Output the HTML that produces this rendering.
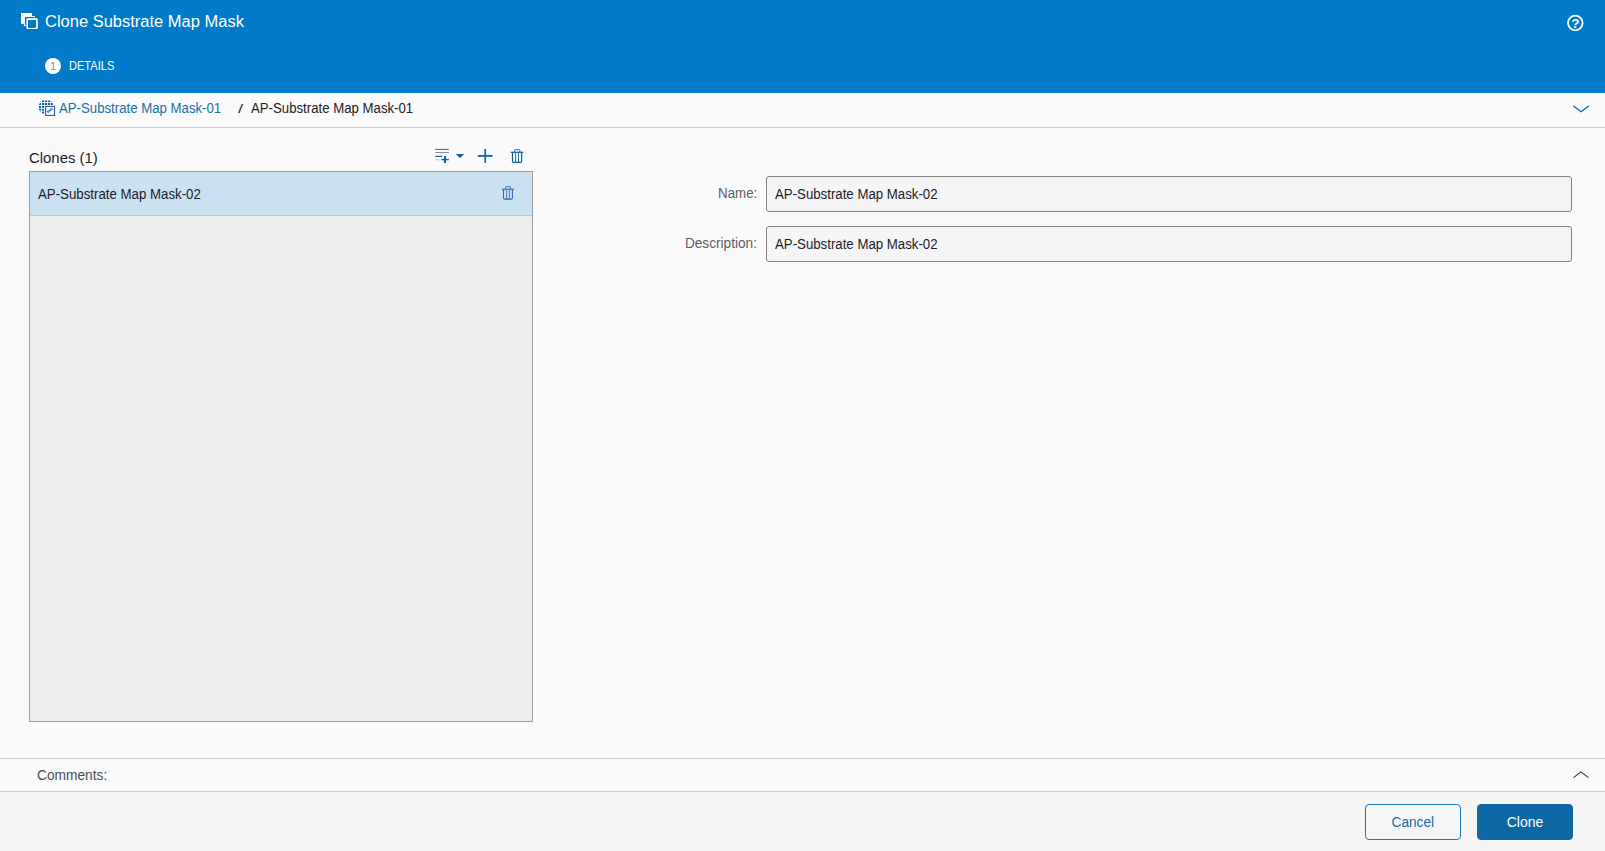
<!DOCTYPE html>
<html lang="en">
<head>
<meta charset="utf-8">
<title>Clone Substrate Map Mask</title>
<style>
  html, body { margin: 0; padding: 0; }
  body {
    width: 1605px; height: 851px; overflow: hidden; position: relative;
    background: #fafafa;
    font-family: "Liberation Sans", sans-serif;
    color: #1f1f1f;
  }
  .abs { position: absolute; white-space: nowrap; }
  .t { display: inline-block; transform-origin: 0 50%; }
  .tr { display: inline-block; transform-origin: 100% 50%; }
  .header { left: 0; top: 0; width: 1605px; height: 93px; background: #007ac9; }
  .title { left: 45px; top: 12px; font-size: 16px; line-height: 20px; color: #fff; }
  .title .t { transform: scaleX(1.031); }
  .step-circle { left: 45px; top: 58px; width: 16px; height: 16px; border-radius: 50%; background: #fff; color: #6c8fb5; font-size: 11px; line-height: 16px; text-align: center; }
  .step-label { left: 69.3px; top: 58px; font-size: 12px; line-height: 16px; color: #fff; }
  .step-label .t { transform: scaleX(0.922); }
  .crumbbar { left: 0; top: 93px; width: 1605px; height: 34px; background: #fafafa; border-bottom: 1px solid #c8cccd; }
  .crumb-link { left: 58.5px; top: 100px; font-size: 14px; line-height: 16px; color: #1a6fa8; }
  .crumb-sep { left: 237.8px; top: 101px; font-size: 13px; line-height: 16px; color: #333; }
  .crumb-sep .t { transform: scaleX(1.4); }
  .crumb-cur { left: 250.5px; top: 100px; font-size: 14px; line-height: 16px; color: #222; }
  .crumb-link .t, .crumb-cur .t { transform: scaleX(0.9432); }
  .clones-title { left: 29.3px; top: 149px; font-size: 15.5px; line-height: 18px; color: #1c1c2c; }
  .clones-title .t { transform: scaleX(0.962); }
  .listbox { left: 29px; top: 171px; width: 502px; height: 549px; background: #ececec; border: 1px solid #a09ca2; }
  .row { left: 0; top: 0; width: 502px; height: 43px; background: #c9e1f0; border-bottom: 1px solid #c4c8cc; }
  .row-text { left: 8.3px; top: 14px; font-size: 14px; line-height: 16px; color: #1c1c2c; }
  .row-text .t { transform: scaleX(0.947); }
  .label { font-size: 14px; line-height: 16px; color: #5d5d5d; text-align: right; width: 200px; }
  .input { left: 766px; width: 804px; height: 34px; background: #f5f5f5; border: 1px solid #828282; border-radius: 3px; }
  .input span { position: absolute; left: 8px; top: 9px; font-size: 14px; line-height: 16px; color: #1c1c2c; transform-origin: 0 50%; transform: scaleX(0.9455); }
  .line { left: 0; width: 1605px; height: 1px; background: #c8cccd; }
  .footer { left: 0; top: 792px; width: 1605px; height: 59px; background: #f5f5f5; }
  .comments { left: 37px; top: 767px; font-size: 14px; line-height: 16px; color: #4a4a55; }
  .comments .t { transform: scaleX(0.982); }
  .btn { top: 804px; width: 96px; height: 36px; box-sizing: border-box; border-radius: 4px; font-size: 14px; line-height: 34px; text-align: center; }
  .btn-cancel { left: 1365px; border: 1px solid #1a7abf; color: #1a6aa5; background: #f6f6f6; }
  .btn-clone { left: 1477px; border: 1px solid #0d68a5; color: #fff; background: #0d68a5; }
  .btn span { display: inline-block; }
  svg { position: absolute; overflow: visible; }
</style>
</head>
<body>
  <div class="abs header"></div>
  <div class="abs title"><span class="t">Clone Substrate Map Mask</span></div>
  <div class="abs step-circle">1</div>
  <div class="abs step-label"><span class="t">DETAILS</span></div>

  <div class="abs crumbbar"></div>
  <div class="abs crumb-link"><span class="t">AP-Substrate Map Mask-01</span></div>
  <div class="abs crumb-sep"><span class="t">/</span></div>
  <div class="abs crumb-cur"><span class="t">AP-Substrate Map Mask-01</span></div>

  <div class="abs clones-title"><span class="t">Clones (1)</span></div>
  <div class="abs listbox">
    <div class="abs row"></div>
    <div class="abs row-text"><span class="t">AP-Substrate Map Mask-02</span></div>
  </div>

  <div class="abs label" style="left:557px; top:185px;"><span class="tr" style="transform:scaleX(0.9507)">Name:</span></div>
  <div class="abs input" style="top:176px;"><span>AP-Substrate Map Mask-02</span></div>
  <div class="abs label" style="left:557px; top:235px;"><span class="tr" style="transform:scaleX(0.974)">Description:</span></div>
  <div class="abs input" style="top:226px;"><span>AP-Substrate Map Mask-02</span></div>

  <div class="abs line" style="top:758px;"></div>
  <div class="abs comments"><span class="t">Comments:</span></div>
  <div class="abs line" style="top:791px;"></div>
  <div class="abs footer"></div>
  <div class="abs btn btn-cancel"><span style="transform:scaleX(0.977)">Cancel</span></div>
  <div class="abs btn btn-clone"><span>Clone</span></div>
  <!-- title clone icon -->
  <svg width="1605" height="851" viewBox="0 0 1605 851" style="left:0;top:0;pointer-events:none">
    <g>
      <rect x="21" y="13" width="11" height="10.8" fill="#fff"/>
      <rect x="23.8" y="16" width="10.9" height="10.1" rx="0.6" fill="#fff"/>
      <rect x="24.9" y="16.95" width="9.2" height="8.2" fill="#007ac9"/>
      <rect x="26.4" y="18.2" width="11.4" height="10.9" rx="1" fill="#fff"/>
      <rect x="28" y="20" width="8.1" height="7.9" fill="#007ac9"/>
    </g>
    <!-- help icon -->
    <circle cx="1575.3" cy="23" r="7.3" fill="none" stroke="#fff" stroke-width="1.8"/>
    <text x="1575.4" y="27.9" font-family="Liberation Sans, sans-serif" font-size="13.5" font-weight="bold" fill="#fff" text-anchor="middle">?</text>

    <!-- breadcrumb wafer icon -->
    <defs><clipPath id="wc"><circle cx="46.2" cy="107" r="7.6"/></clipPath></defs>
    <g clip-path="url(#wc)" fill="#0b60b3">
      <rect x="39" y="100.5" width="2.1" height="1.5"/><rect x="42" y="100.5" width="2.1" height="1.5"/><rect x="45" y="100.5" width="2.1" height="1.5"/><rect x="47.9" y="100.5" width="2.1" height="1.5"/><rect x="50.8" y="100.5" width="2.1" height="1.5"/>
      <rect x="39" y="103" width="2.1" height="2"/><rect x="42" y="103" width="2.1" height="2"/><rect x="45" y="103" width="2.1" height="2"/><rect x="47.9" y="103" width="2.1" height="2"/><rect x="50.8" y="103" width="2.1" height="2"/>
      <rect x="39" y="105.9" width="2.1" height="2"/><rect x="42" y="105.9" width="2.1" height="2"/>
      <rect x="39" y="108.7" width="2.1" height="2"/><rect x="42" y="108.7" width="2.1" height="2"/>
      <rect x="39" y="111.5" width="2.1" height="2"/><rect x="42" y="111.5" width="2.1" height="2"/>
    </g>
    <rect x="45.6" y="106.4" width="8.9" height="9" fill="#fff" stroke="#3555a8" stroke-width="1.1"/>
    <g transform="translate(49.9 110.4) rotate(-37)"><rect x="-3.45" y="-1.15" width="1.15" height="1.15" fill="#2450b0"/><rect x="-2.30" y="-1.15" width="1.15" height="1.15" fill="#62a8ee"/><rect x="-1.15" y="-1.15" width="1.15" height="1.15" fill="#2450b0"/><rect x="0.00" y="-1.15" width="1.15" height="1.15" fill="#62a8ee"/><rect x="1.15" y="-1.15" width="1.15" height="1.15" fill="#2450b0"/><rect x="2.30" y="-1.15" width="1.15" height="1.15" fill="#62a8ee"/><rect x="-3.45" y="0.00" width="1.15" height="1.15" fill="#62a8ee"/><rect x="-2.30" y="0.00" width="1.15" height="1.15" fill="#2450b0"/><rect x="-1.15" y="0.00" width="1.15" height="1.15" fill="#62a8ee"/><rect x="0.00" y="0.00" width="1.15" height="1.15" fill="#2450b0"/><rect x="1.15" y="0.00" width="1.15" height="1.15" fill="#62a8ee"/><rect x="2.30" y="0.00" width="1.15" height="1.15" fill="#2450b0"/></g>

    <!-- breadcrumb chevron down -->
    <path d="M1573.5 106 L1581.1 111.8 L1588.7 106" fill="none" stroke="#0b62b0" stroke-width="1.3"/>

    <!-- list add icon -->
    <path d="M435.2 149.4 H448.8" stroke="#4a5eaa" stroke-width="1"/>
    <path d="M435.2 152.5 H448.8" stroke="#8c8898" stroke-width="1"/>
    <path d="M435.2 156.4 H442.1" stroke="#0a62a5" stroke-width="1.2"/>
    <path d="M435.5 159.8 H439.2" stroke="#bfc3c8" stroke-width="1.2"/>
    <path d="M441.3 159.6 H448.8" stroke="#0a62a5" stroke-width="1.4"/>
    <path d="M445 156 V163" stroke="#0a62b5" stroke-width="2"/>
    <path d="M455.8 153.9 H464.2 L460 158.1 Z" fill="#0a62a5"/>

    <!-- plus -->
    <path d="M477.9 155.9 H492.5" stroke="#0a62a8" stroke-width="1.8"/>
    <path d="M485.25 148.9 V162.9" stroke="#0a66b8" stroke-width="1.7"/>

    <!-- trash (toolbar) -->
    <g fill="none" stroke="#0a62a5" stroke-width="1.25">
      <path d="M510.8 152.3 H523.3"/>
      <path d="M514.6 152 V150.3 a0.6 0.6 0 0 1 0.6 -0.6 H519.3 a0.6 0.6 0 0 1 0.6 0.6 V152" stroke-width="0.95"/>
      <path d="M512.5 152.5 V161.3 a1 1 0 0 0 1 1 H520.6 a1 1 0 0 0 1 -1 V152.5"/>
      <path d="M515.6 153 V162 M518.5 153 V162" stroke-width="0.9"/>
    </g>

    <!-- trash (row) -->
    <g fill="none" stroke="#3164c0" stroke-width="1.05">
      <path d="M501.8 189.3 H514"/>
      <path d="M505.55 189 V187.3 a0.6 0.6 0 0 1 0.6 -0.6 H510.05 a0.6 0.6 0 0 1 0.6 0.6 V189" stroke-width="0.9"/>
      <path d="M503.5 189.5 V198.1 a1 1 0 0 0 1 1 H511.4 a1 1 0 0 0 1 -1 V189.5"/>
      <path d="M506.6 190 V199 M509.4 190 V199" stroke-width="0.8"/>
    </g>

    <!-- comments chevron up -->
    <path d="M1573.5 777.6 L1580.9 771.9 L1588.5 777.6" fill="none" stroke="#3a3238" stroke-width="1.1"/>
  </svg>
</body>
</html>
